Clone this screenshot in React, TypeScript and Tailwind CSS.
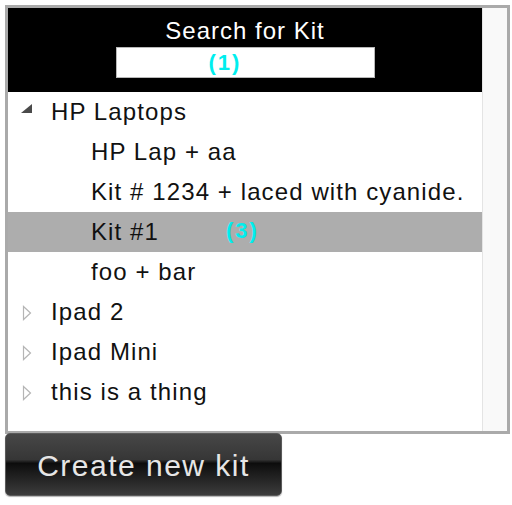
import React from 'react';

type Row = { label: string; depth: 0 | 1; open?: boolean; selected?: boolean; tag?: string };

const rows: Row[] = [
  { label: 'HP Laptops', depth: 0, open: true },
  { label: 'HP Lap + aa', depth: 1 },
  { label: 'Kit # 1234 + laced with cyanide.', depth: 1 },
  { label: 'Kit #1', depth: 1, selected: true, tag: '(3)' },
  { label: 'foo + bar', depth: 1 },
  { label: 'Ipad 2', depth: 0, open: false },
  { label: 'Ipad Mini', depth: 0, open: false },
  { label: 'this is a thing', depth: 0, open: false },
];

const Caret: React.FC<{ open?: boolean }> = ({ open }) =>
  open ? (
    <svg width="12" height="10" viewBox="0 0 12 10" className="ml-[13px] mt-[-6px]">
      <polygon points="11,0 11,9 0,9" fill="#4a4a4a" />
    </svg>
  ) : (
    <svg width="10" height="16" viewBox="0 0 10 16" className="ml-[14px] mt-[2px]">
      <polygon points="1.5,1.5 8.5,8 1.5,14.5" fill="#fff" stroke="#b5b5b5" strokeWidth="1.2" />
    </svg>
  );

export default function App() {
  return (
    <div className="w-[512px] h-[505px] bg-white pt-[5px] pl-[5px] font-['Liberation_Sans',Arial,sans-serif]">
      <div className="w-[505px] h-[429px] border-[3px] border-[#aaaaaa] flex">
        <div className="w-[474px] flex flex-col">
          {/* header */}
          <div className="h-[84px] bg-black flex flex-col items-center pt-[9px]">
            <div className="text-white text-[24px] leading-[28px] tracking-[1px]">Search for Kit</div>
            <div className="relative mt-[2px] w-[259px] h-[31px] bg-white border border-[#b8b8b8]">
              <span className="absolute left-[92px] top-[3px] text-[22px] leading-[24px] font-bold tracking-[2px] text-[#00eeee]">
                (1)
              </span>
            </div>
          </div>

          {/* tree */}
          <div className="flex flex-col">
            {rows.map((r) => (
              <div
                key={r.label}
                className={`relative h-[40px] flex items-center text-[24px] tracking-[1.1px] text-[#111] ${
                  r.selected ? 'bg-[#adadad]' : ''
                }`}
              >
                {r.depth === 0 ? (
                  <>
                    <div className="w-[43px] flex items-center">
                      <Caret open={r.open} />
                    </div>
                    <span>{r.label}</span>
                  </>
                ) : (
                  <span className="pl-[83px]">{r.label}</span>
                )}
                {r.tag && (
                  <span className="absolute left-[218px] top-[7px] text-[22px] leading-[24px] font-bold tracking-[2px] text-[#00eeee]">
                    {r.tag}
                  </span>
                )}
              </div>
            ))}
          </div>
        </div>
        <div className="w-[25px] bg-[#f9f9f9] border-l border-[#e4e4e4]" />
      </div>

      <button className="mt-[-1px] w-[277px] h-[63px] rounded-[5px] border border-[#5a5a5a] bg-[linear-gradient(to_bottom,#474747_0%,#363636_42%,#0c0c0c_48%,#1a1a1a_62%,#3c3c3c_100%)] text-[#e6e6e6] text-[30px] tracking-[1.5px] leading-none flex items-center justify-center pt-[3px] shadow-[0_1px_1px_rgba(0,0,0,0.3)]">
        Create new kit
      </button>
    </div>
  );
}
